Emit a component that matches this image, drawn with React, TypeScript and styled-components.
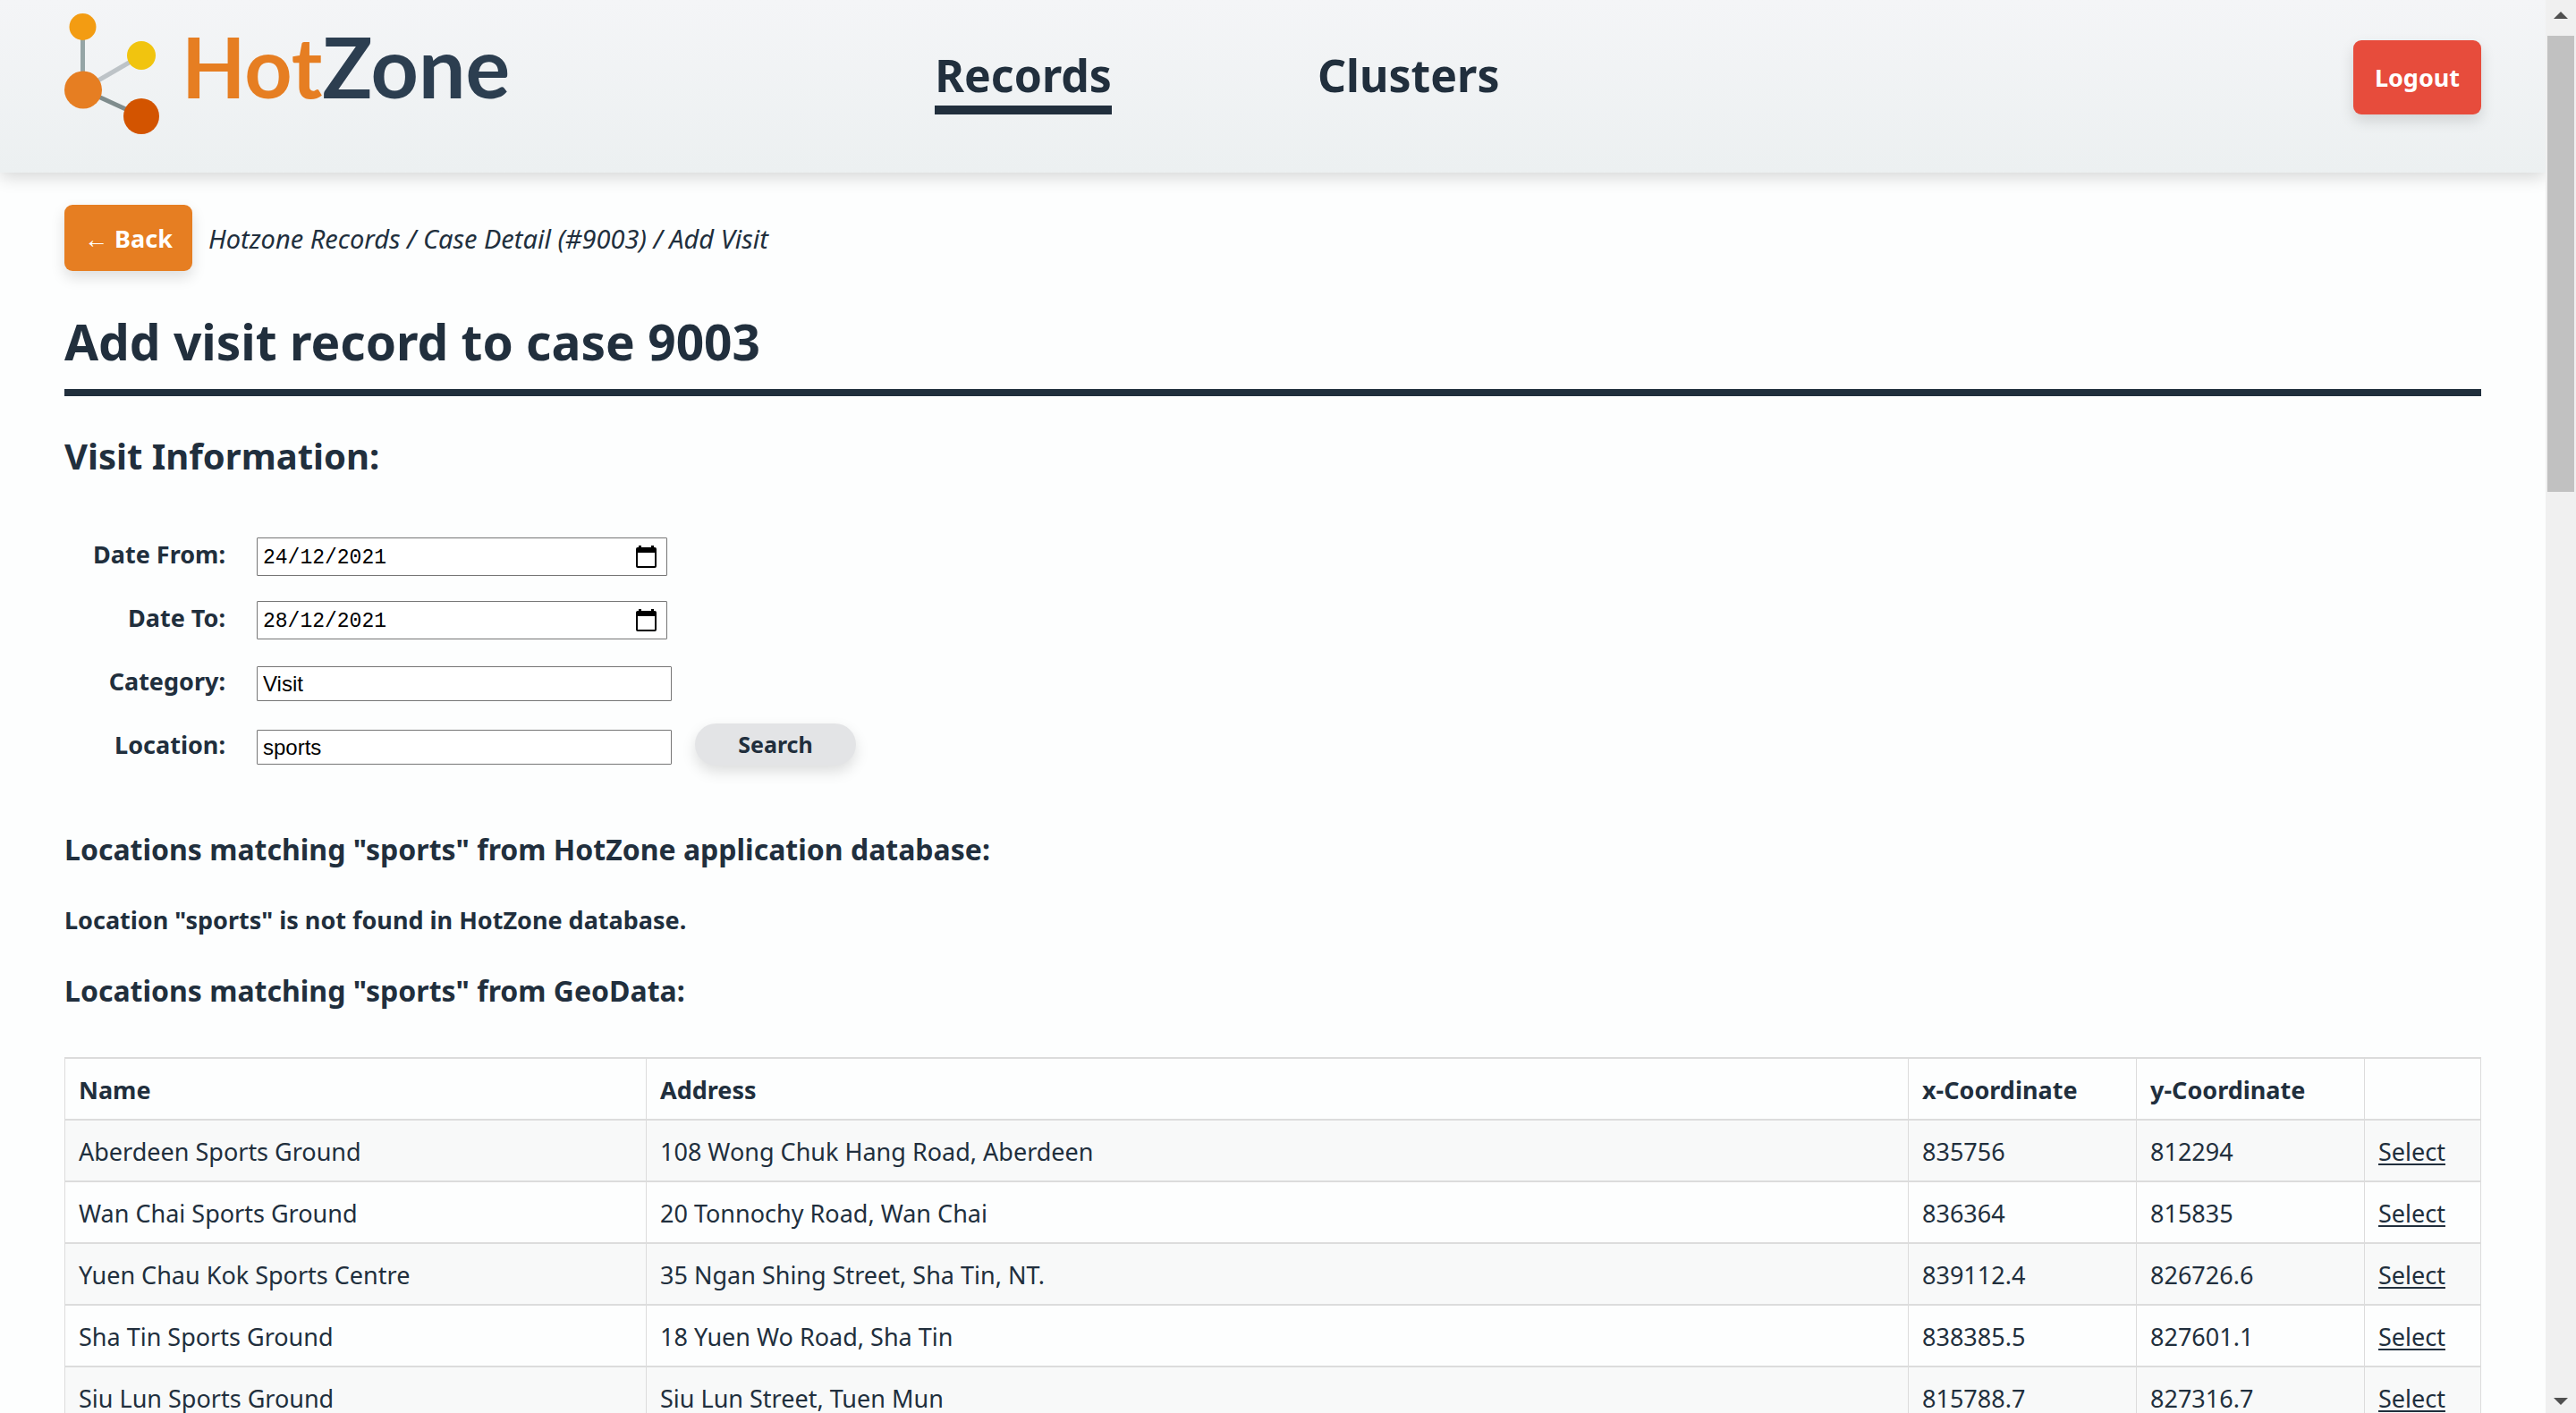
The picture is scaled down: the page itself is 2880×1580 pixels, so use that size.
import React from "react";
import styled, { createGlobalStyle } from "styled-components";

const ink = "#212f3d";
const line = "#dcdcdc";
const softShadow = "0 7px 16px rgba(0, 0, 0, 0.13)";

const GlobalStyle = createGlobalStyle`
  *, *::before, *::after { box-sizing: border-box; }
  body {
    margin: 0;
    background: #fdfefe;
    color: ${ink};
    font-family: "Noto Sans", "Open Sans", sans-serif;
    font-size: 27px;
    line-height: 37px;
  }
`;

const Window = styled.div`
  display: grid;
  grid-template-columns: minmax(0, 1fr) 34px;
  height: 100vh;
  overflow: hidden;
`;

const Page = styled.div`
  min-height: 0;
  overflow: hidden;
`;

const Header = styled.header`
  display: grid;
  grid-template-columns: 47fr auto 53fr;
  align-items: center;
  padding: 14px 72px 43px;
  background: linear-gradient(#f4f5f7, #ecf0f1);
  box-shadow: 0 5px 18px rgba(0, 0, 0, 0.16);
`;

const Brand = styled.a`
  display: flex;
  align-items: flex-start;
  gap: 25px;
  text-decoration: none;
`;

const LogoMark = styled.svg`
  display: block;
  width: 106px;
  height: 136px;
`;

const Wordmark = styled.span`
  color: #2c3e50;
  font-family: Lato, sans-serif;
  font-size: 93px;
  font-weight: 700;
  line-height: 120px;
`;

const Hot = styled.span`
  color: #e67e22;
`;

const MainNav = styled.nav`
  display: flex;
  gap: 230px;
  padding-top: 14px;
`;

const NavLink = styled.a<{ $active?: boolean }>`
  border-bottom: 10px solid ${(p) => (p.$active ? ink : "transparent")};
  color: ${ink};
  font-size: 50px;
  font-weight: 700;
  line-height: 68px;
  text-decoration: none;
`;

const Button = styled.button<{ $fill: string }>`
  border: 0;
  border-radius: 9px;
  background: ${(p) => p.$fill};
  box-shadow: ${softShadow};
  color: #fff;
  cursor: pointer;
  font: inherit;
  font-weight: 700;
`;

const LogoutButton = styled(Button)`
  justify-self: end;
  width: 143px;
  height: 83px;
  margin-top: 9px;
  padding: 0;
`;

const BackButton = styled(Button)`
  width: 143px;
  height: 74px;
  padding: 0;
`;

const Content = styled.main`
  padding: 36px 72px;
`;

const TopLine = styled.div`
  display: flex;
  align-items: center;
  gap: 18px;
`;

const Breadcrumb = styled.nav`
  font-size: 29px;
  font-style: italic;
`;

const Title = styled.h1`
  margin: 41px 0 0;
  padding-bottom: 16px;
  border-bottom: 8px solid ${ink};
  font-size: 55px;
  line-height: 75px;
`;

const SectionTitle = styled.h2`
  margin: 39px 0 49px;
  font-size: 40px;
  line-height: 56px;
`;

const Form = styled.form`
  margin-bottom: 57px;
`;

const Field = styled.div`
  display: flex;
  align-items: center;
  height: 71px;
`;

const Label = styled.label`
  width: 180px;
  margin: 0 35px 6px 0;
  font-weight: 700;
  text-align: right;
`;

const TextInput = styled.input`
  width: 464px;
  height: 39px;
  padding: 0 6px;
  border: 1px solid #767676;
  border-radius: 1px;
  background: #fff;
  color: #000;
  font-family: "Liberation Sans", Arial, sans-serif;
  font-size: 24px;
`;

const DateBox = styled.div`
  display: flex;
  align-items: center;
  width: 459px;
  height: 43px;
  padding: 0 11px 0 6px;
  border: 1px solid #767676;
  border-radius: 1px;
  background: #fff;
`;

const DateInput = styled.input`
  flex: 1;
  min-width: 0;
  padding: 3px 0 0;
  border: 0;
  background: transparent;
  color: #000;
  font-family: "Liberation Mono", monospace;
  font-size: 23px;
`;

const PickerButton = styled.button`
  display: flex;
  padding: 0;
  border: 0;
  background: transparent;
  cursor: pointer;
`;

const SearchButton = styled.button`
  width: 180px;
  height: 47px;
  margin: 0 0 6px 26px;
  padding: 0;
  border: 0;
  border-radius: 24px;
  background: #e3e4e6;
  box-shadow: ${softShadow};
  color: ${ink};
  cursor: pointer;
  font: inherit;
  font-size: 25px;
  font-weight: 700;
`;

const ResultTitle = styled.h3`
  margin: 0;
  font-size: 32px;
  line-height: 44px;
`;

const Notice = styled.p`
  margin: 38px 0 39px;
  font-weight: 700;
`;

const Table = styled.table`
  width: 100%;
  margin-top: 52px;
  border-collapse: collapse;
  table-layout: fixed;
`;

const Col = styled.col<{ $width?: string }>`
  width: ${(p) => p.$width ?? "auto"};
`;

const Row = styled.tr`
  tbody > &:nth-child(odd) {
    background: #f8f9f9;
  }
`;

const HeadCell = styled.th`
  padding: 16px 15px 14px;
  border: 2px solid ${line};
  border-width: 2px 1px;
  font-weight: 700;
  text-align: left;
`;

const Cell = styled.td`
  padding: 16px 15px 14px;
  border: 2px solid ${line};
  border-width: 2px 1px;
`;

const SelectLink = styled.a`
  color: ${ink};
  text-decoration: underline;
  text-decoration-thickness: 2px;
  text-underline-offset: 3px;
`;

const ScrollTrack = styled.div`
  display: grid;
  grid-template-rows: 40px minmax(0, 1fr) 40px;
  padding: 0 2px;
  background: #f0f0f0;
`;

const ScrollThumb = styled.div`
  height: 34%;
  background: #c1c1c1;
`;

const ScrollArrow = styled.button<{ $down?: boolean }>`
  display: flex;
  align-items: ${(p) => (p.$down ? "flex-end" : "flex-start")};
  justify-content: center;
  padding: ${(p) => (p.$down ? "0 0 9px" : "13px 0 0")};
  border: 0;
  background: transparent;
`;

function Logo() {
  return (
    <LogoMark viewBox="0 0 106 136" aria-hidden="true">
      <path d="M20.500 20V86" stroke="#95a5a6" strokeWidth="5" />
      <path d="M20.500 86L86 48" stroke="#bdc3c7" strokeWidth="5" />
      <path d="M20.500 86L86 116" stroke="#7f8c8d" strokeWidth="5" />
      <circle cx="20.500" cy="16" r="15" fill="#f39c12" />
      <circle cx="86" cy="48" r="16" fill="#f1c40f" />
      <circle cx="21" cy="86.500" r="21" fill="#e67e22" />
      <circle cx="86" cy="116" r="20" fill="#d35400" />
    </LogoMark>
  );
}

function CalendarIcon() {
  return (
    <svg width="23" height="25" viewBox="0 0 23 25" aria-hidden="true">
      <path
        d="M3 0h3v2h11V0h3v2h1a2 2 0 0 1 2 2v19a2 2 0 0 1-2 2H2a2 2 0 0 1-2-2V4a2 2 0 0 1 2-2h1zM2 8v15h19V8z"
        fill="#000"
        fillRule="evenodd"
      />
    </svg>
  );
}

function DateField({ id, label, value }: { id: string; label: string; value: string }) {
  return (
    <Field>
      <Label htmlFor={id}>{label}</Label>
      <DateBox>
        <DateInput id={id} defaultValue={value} inputMode="numeric" />
        <PickerButton type="button" aria-label="Open calendar">
          <CalendarIcon />
        </PickerButton>
      </DateBox>
    </Field>
  );
}

const locations = [
  ["Aberdeen Sports Ground", "108 Wong Chuk Hang Road, Aberdeen", "835756", "812294"],
  ["Wan Chai Sports Ground", "20 Tonnochy Road, Wan Chai", "836364", "815835"],
  ["Yuen Chau Kok Sports Centre", "35 Ngan Shing Street, Sha Tin, NT.", "839112.4", "826726.6"],
  ["Sha Tin Sports Ground", "18 Yuen Wo Road, Sha Tin", "838385.5", "827601.1"],
  ["Siu Lun Sports Ground", "Siu Lun Street, Tuen Mun", "815788.7", "827316.7"],
];

export default function App() {
  return (
    <Window>
      <GlobalStyle />
      <Page>
        <Header>
          <Brand href="#home">
            <Logo />
            <Wordmark>
              <Hot>Hot</Hot>Zone
            </Wordmark>
          </Brand>
          <MainNav>
            <NavLink href="#records" $active>
              Records
            </NavLink>
            <NavLink href="#clusters">Clusters</NavLink>
          </MainNav>
          <LogoutButton $fill="#e74c3c">Logout</LogoutButton>
        </Header>

        <Content>
          <TopLine>
            <BackButton $fill="#e67e22">← Back</BackButton>
            <Breadcrumb>Hotzone Records / Case Detail (#9003) / Add Visit</Breadcrumb>
          </TopLine>
          <Title>Add visit record to case 9003</Title>
          <SectionTitle>Visit Information:</SectionTitle>

          <Form onSubmit={(e) => e.preventDefault()}>
            <DateField id="date-from" label="Date From:" value="24/12/2021" />
            <DateField id="date-to" label="Date To:" value="28/12/2021" />
            <Field>
              <Label htmlFor="category">Category:</Label>
              <TextInput id="category" defaultValue="Visit" />
            </Field>
            <Field>
              <Label htmlFor="location">Location:</Label>
              <TextInput id="location" defaultValue="sports" />
              <SearchButton type="submit">Search</SearchButton>
            </Field>
          </Form>

          <ResultTitle>Locations matching "sports" from HotZone application database:</ResultTitle>
          <Notice>Location "sports" is not found in HotZone database.</Notice>
          <ResultTitle>Locations matching "sports" from GeoData:</ResultTitle>

          <Table>
            <colgroup>
              <Col $width="650px" />
              <Col />
              <Col $width="255px" />
              <Col $width="255px" />
              <Col $width="130px" />
            </colgroup>
            <thead>
              <Row>
                <HeadCell>Name</HeadCell>
                <HeadCell>Address</HeadCell>
                <HeadCell>x-Coordinate</HeadCell>
                <HeadCell>y-Coordinate</HeadCell>
                <HeadCell />
              </Row>
            </thead>
            <tbody>
              {locations.map(([name, address, x, y]) => (
                <Row key={name}>
                  <Cell>{name}</Cell>
                  <Cell>{address}</Cell>
                  <Cell>{x}</Cell>
                  <Cell>{y}</Cell>
                  <Cell>
                    <SelectLink href="#select">Select</SelectLink>
                  </Cell>
                </Row>
              ))}
            </tbody>
          </Table>
        </Content>
      </Page>

      <ScrollTrack>
        <ScrollArrow aria-label="Scroll up">
          <svg width="16" height="8" viewBox="0 0 16 8">
            <path d="M0 8L8 0l8 8z" fill="#505050" />
          </svg>
        </ScrollArrow>
        <ScrollThumb />
        <ScrollArrow $down aria-label="Scroll down">
          <svg width="16" height="8" viewBox="0 0 16 8">
            <path d="M0 0h16L8 8z" fill="#505050" />
          </svg>
        </ScrollArrow>
      </ScrollTrack>
    </Window>
  );
}
